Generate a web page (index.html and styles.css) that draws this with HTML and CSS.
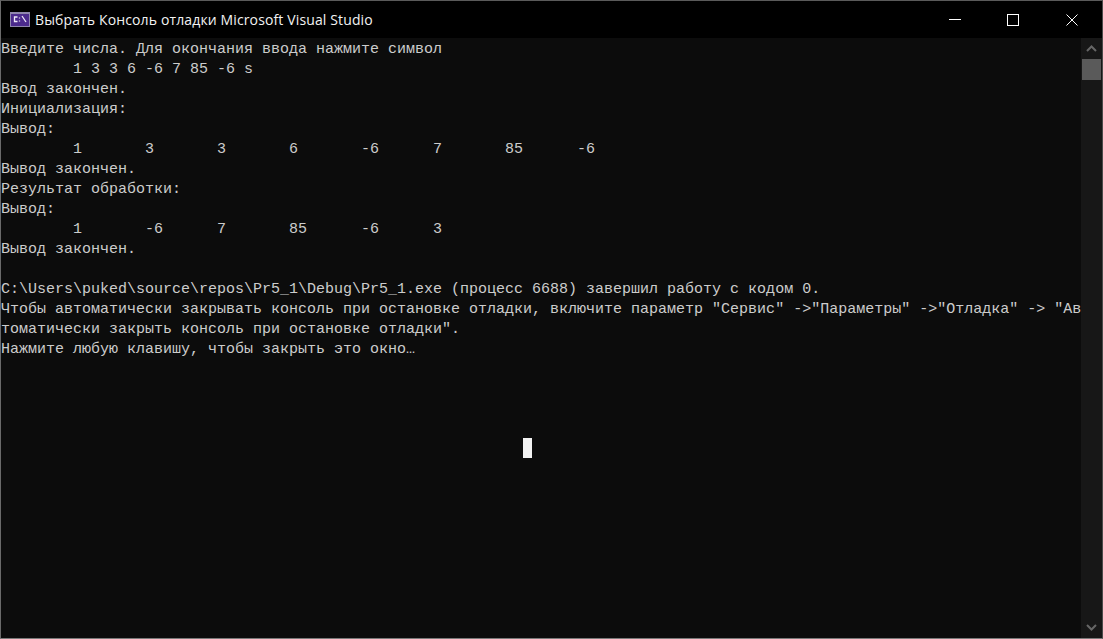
FILE: index.html
```html
<!DOCTYPE html>
<html lang="ru">
<head>
<meta charset="utf-8">
<title>Консоль отладки</title>
<link rel="stylesheet" href="styles.css">
</head>
<body>
<div class="window">
  <header class="titlebar">
    <svg class="app-icon" width="20" height="15" viewBox="0 0 20 15">
      <rect x="0" y="0" width="20" height="15" fill="#8f86ad"/>
      <rect x="1" y="2" width="18" height="12" fill="#4b2a8c"/>
      <path d="M7.500 5H4.500v4.500h3M9.500 5.500v1M9.500 8.500v1M12 4l4 6" stroke="#efeaf8" fill="none" stroke-width="1.300"/>
    </svg>
    <span class="title">Выбрать Консоль отладки Microsoft Visual Studio</span>
    <div class="controls">
      <div class="ctl">
        <svg width="12" height="12" viewBox="0 0 12 12"><path d="M0 5.500H12" stroke="#fff" stroke-width="1"/></svg>
      </div>
      <div class="ctl">
        <svg width="12" height="12" viewBox="0 0 12 12"><rect x="0.500" y="0.500" width="11" height="11" fill="none" stroke="#fff"/></svg>
      </div>
      <div class="ctl ctl-close">
        <svg width="12" height="12" viewBox="0 0 12 12"><path d="M0.500 0.500L11.500 11.500M11.500 0.500L0.500 11.500" stroke="#fff" stroke-width="1"/></svg>
      </div>
    </div>
  </header>
  <div class="body">
    <main class="console">
<pre class="output">Введите числа. Для окончания ввода нажмите символ
	1 3 3 6 -6 7 85 -6 s
Ввод закончен.
Инициализация:
Вывод:
	1	3	3	6	-6	7	85	-6
Вывод закончен.
Результат обработки:
Вывод:
	1	-6	7	85	-6	3
Вывод закончен.

C:\Users\puked\source\repos\Pr5_1\Debug\Pr5_1.exe (процесс 6688) завершил работу с кодом 0.
Чтобы автоматически закрывать консоль при остановке отладки, включите параметр "Сервис" -&gt;"Параметры" -&gt;"Отладка" -&gt; "Ав
томатически закрыть консоль при остановке отладки".
Нажмите любую клавишу, чтобы закрыть это окно…</pre>
      <div class="cursor"></div>
    </main>
    <aside class="scrollbar">
      <div class="arrow">
        <svg width="11" height="7" viewBox="0 0 11 7"><path d="M1 6L5.500 1.500L10 6" fill="none" stroke="#666" stroke-width="2"/></svg>
      </div>
      <div class="thumb"></div>
      <div class="track"></div>
      <div class="arrow">
        <svg width="11" height="7" viewBox="0 0 11 7"><path d="M1 1L5.500 5.500L10 1" fill="none" stroke="#666" stroke-width="2"/></svg>
      </div>
    </aside>
  </div>
</div>
</body>
</html>
```
FILE: styles.css
```css
html, body {
  margin: 0;
  padding: 0;
  height: 100%;
  background: #0c0c0c;
  overflow: hidden;
}
.window {
  height: 639px;
  display: flex;
  flex-direction: column;
  border-left: 1px solid #6a6a6a;
  border-right: 1px solid #4a4a4a;
  border-top: 1px solid #5a5a5a;
  border-bottom: 1px solid #7a7a7a;
  box-sizing: border-box;
}
.titlebar {
  height: 37px;
  flex: none;
  background: #000;
  display: flex;
  align-items: center;
  padding-left: 9px;
  padding-right: 8px;
  color: #fff;
}
.app-icon {
  flex: none;
  margin-right: 5px;
}
.title {
  font: 14px "Open Sans", "Noto Sans", sans-serif;
  letter-spacing: 0.13px;
  color: #f2f2f2;
  white-space: nowrap;
}
.controls {
  margin-left: auto;
  display: flex;
  align-self: stretch;
}
.ctl {
  width: 45px;
  margin-left: 13px;
  display: flex;
  align-items: center;
  justify-content: center;
}
.ctl-close {
  margin-left: 14px;
}
.body {
  flex: 1;
  display: flex;
  min-height: 0;
}
.console {
  flex: 1;
  position: relative;
  min-width: 0;
  overflow: hidden;
}
.output {
  margin: 0;
  padding-top: 2px;
  font: 15px/20px "Liberation Mono", monospace;
  color: #cccccc;
  tab-size: 8;
  white-space: pre;
}
.cursor {
  position: absolute;
  left: 522px;
  top: 400px;
  width: 9px;
  height: 20px;
  background: #f2f2f2;
}
.scrollbar {
  width: 21px;
  flex: none;
  background: #171717;
  display: flex;
  flex-direction: column;
}
.arrow {
  height: 21px;
  flex: none;
  display: flex;
  align-items: center;
  justify-content: center;
}
.thumb {
  height: 21px;
  margin: 0 1px;
  background: #5a5a5a;
  flex: none;
}
.track {
  flex: 1;
}
```
